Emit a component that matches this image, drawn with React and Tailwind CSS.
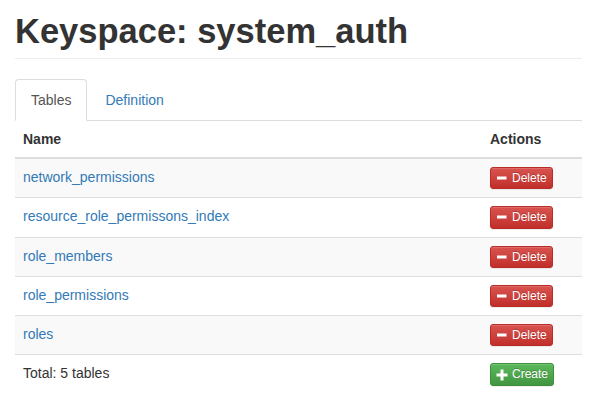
import { useState } from "react";

function MinusIcon() {
  return (
    <svg width="12" height="12" viewBox="0 0 12 12" className="mr-[4px] shrink-0">
      <rect x="1" y="4.5" width="9.5" height="3" fill="white" />
    </svg>
  );
}

function PlusIcon() {
  return (
    <svg width="12" height="12" viewBox="0 0 12 12" className="mr-[4px] shrink-0">
      <rect x="0.5" y="4.5" width="11" height="3" fill="white" />
      <rect x="4.5" y="0.5" width="3" height="11" fill="white" />
    </svg>
  );
}

function DeleteButton() {
  return (
    <button className="inline-flex items-center px-[5px] py-[1px] text-[12px] leading-[18.3px] text-white rounded-[3px] border border-[#b92c28] bg-linear-to-b from-[#d9534f] to-[#c12e2a] shadow-[inset_0_1px_0_rgba(255,255,255,0.15),0_1px_1px_rgba(0,0,0,0.075)] [text-shadow:0_-1px_0_rgba(0,0,0,0.2)]">
      <MinusIcon />
      Delete
    </button>
  );
}

function CreateButton() {
  return (
    <button className="inline-flex items-center px-[5px] py-[1px] text-[12px] leading-[18.3px] text-white rounded-[3px] border border-[#3e8f3e] bg-linear-to-b from-[#5cb85c] to-[#419641] shadow-[inset_0_1px_0_rgba(255,255,255,0.15),0_1px_1px_rgba(0,0,0,0.075)] [text-shadow:0_-1px_0_rgba(0,0,0,0.2)]">
      <PlusIcon />
      Create
    </button>
  );
}

export default function App() {
  const [tab, setTab] = useState("tables");
  const tables = [
    "network_permissions",
    "resource_role_permissons_index",
    "role_members",
    "role_permissions",
    "roles",
  ];

  return (
    <div className="min-h-screen bg-white pl-[15px] pr-[12px] pt-[12px] font-['Liberation_Sans',Arial,sans-serif] text-[14px] leading-[20px] text-[#333]">
      {/* Header */}
      <h1 className="text-[34.5px] font-bold leading-[38px] pb-[8px] border-b border-[#eee] text-[#333]">
        Keyspace: system_auth
      </h1>

      {/* Tabs */}
      <ul className="mt-[20px] flex border-b border-[#ddd]">
        <li className="-mb-px">
          <a
            onClick={() => setTab("tables")}
            className={
              tab === "tables"
                ? "block mr-[2px] px-[15px] py-[10px] leading-[20px] rounded-t-[4px] border border-[#ddd] border-b-transparent bg-white text-[#555] cursor-default"
                : "block mr-[2px] px-[15px] py-[10px] leading-[20px] rounded-t-[4px] border border-transparent text-[#337ab7] cursor-pointer"
            }
          >
            Tables
          </a>
        </li>
        <li className="-mb-px">
          <a
            onClick={() => setTab("definition")}
            className={
              tab === "definition"
                ? "block mr-[2px] px-[15px] py-[10px] leading-[20px] rounded-t-[4px] border border-[#ddd] border-b-transparent bg-white text-[#555] cursor-default"
                : "block mr-[2px] px-[15px] py-[10px] leading-[20px] rounded-t-[4px] border border-transparent text-[#337ab7] cursor-pointer"
            }
          >
            Definition
          </a>
        </li>
      </ul>

      {/* Table */}
      <table className="w-full border-collapse">
        <thead>
          <tr>
            <th className="text-left font-bold p-[8px] leading-[20px] border-b-2 border-[#ddd]">
              Name
            </th>
            <th className="w-[100px] text-left font-bold p-[8px] leading-[20px] border-b-2 border-[#ddd]">
              Actions
            </th>
          </tr>
        </thead>
        <tbody>
          {tables.map((name, i) => (
            <tr key={name} className={i % 2 === 0 ? "bg-[#f9f9f9]" : "bg-white"}>
              <td className="p-[8px] align-top border-t border-[#ddd]">
                <a className="text-[#337ab7] cursor-pointer">{name}</a>
              </td>
              <td className="p-[8px] align-top border-t border-[#ddd]">
                <DeleteButton />
              </td>
            </tr>
          ))}
          <tr className="bg-white">
            <td className="p-[8px] align-top border-t border-[#ddd]">Total: 5 tables</td>
            <td className="p-[8px] align-top border-t border-[#ddd]">
              <CreateButton />
            </td>
          </tr>
        </tbody>
      </table>
    </div>
  );
}
